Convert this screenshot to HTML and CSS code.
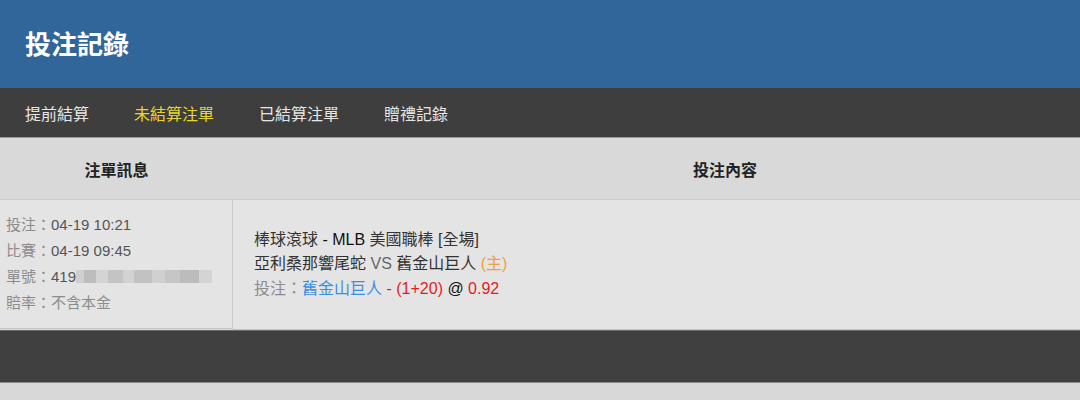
FILE: index.html
```html
<!DOCTYPE html>
<html lang="zh-Hant">
<head>
    <meta charset="UTF-8">
    <meta name="viewport" content="width=device-width, initial-scale=1.0">
    <title>投注記錄</title>
    <link rel="stylesheet" href="styles.css">
</head>
<body>
    <!-- Page title -->
    <header class="top-bar">
        <h1>投注記錄</h1>
    </header>

    <!-- Tabs -->
    <nav class="tabs">
        <a href="#">提前結算</a>
        <a href="#" class="active">未結算注單</a>
        <a href="#">已結算注單</a>
        <a href="#">贈禮記錄</a>
    </nav>

    <!-- Bet table -->
    <div class="table-wrap">
        <div class="bet-table">
            <div class="head-cell">注單訊息</div>
            <div class="head-cell">投注內容</div>

            <div class="info-cell">
                <div><span class="label">投注：</span>04-19 10:21</div>
                <div><span class="label">比賽：</span>04-19 09:45</div>
                <div><span class="label">單號：</span>419<span class="masked"></span></div>
                <div><span class="label">賠率：</span><span class="label">不含本金</span></div>
            </div>
            <div class="content-cell">
                <div class="line">棒球滾球 <span class="strong">- MLB</span> 美國職棒 [全場]</div>
                <div class="line">亞利桑那響尾蛇 <span class="vs">VS</span> 舊金山巨人 <span class="home">(主)</span></div>
                <div class="line"><span class="label">投注：</span><span class="pick">舊金山巨人</span> <span class="odds">- (1+20)</span> <span class="at">@</span> <span class="odds">0.92</span></div>
            </div>
        </div>
    </div>

    <div class="footer-bar"></div>
</body>
</html>
```

FILE: styles.css
```css
body {
    margin: 0;
    padding: 0;
    background-color: #d8d8d8;
    font-family: "Liberation Sans", "Noto Sans CJK TC", sans-serif;
    overflow: hidden;
}

/* Title bar */
.top-bar {
    height: 88px;
    background-color: #31669b;
    display: flex;
    align-items: center;
    padding: 0 0 4px 25px;
    box-sizing: border-box;
}

.top-bar h1 {
    margin: 0;
    color: #fff;
    font-size: 26px;
    font-weight: bold;
    font-family: "Noto Sans CJK TC", sans-serif;
}

/* Tabs */
.tabs {
    height: 49px;
    background-color: #3e3e3e;
    border-bottom: 1px solid #9a9a9a;
    display: flex;
    align-items: center;
    gap: 45px;
    padding-left: 25px;
}

.tabs a {
    color: #e6e6e6;
    font-size: 16px;
    text-decoration: none;
    font-family: "Noto Sans CJK TC", sans-serif;
}

.tabs a.active {
    color: #e8d72a;
}

/* Table */
.table-wrap {
    overflow: hidden;
}

.bet-table {
    display: grid;
    grid-template-columns: 233px 984px;
    width: 1217px;
}

.head-cell {
    height: 61px;
    background-color: #d9d9d9;
    border-bottom: 1px solid #cdcdcd;
    display: flex;
    align-items: center;
    justify-content: center;
    font-size: 16px;
    font-weight: bold;
    color: #222;
    font-family: "Noto Sans CJK TC", sans-serif;
}

.info-cell,
.content-cell {
    background-color: #e4e4e4;
    height: 129px;
    border-bottom: 1px solid #c6c6c6;
}

.info-cell {
    border-right: 1px solid #cacaca;
    padding: 12px 0 0 6px;
    box-sizing: border-box;
    font-size: 15px;
    line-height: 26px;
    color: #555;
    white-space: nowrap;
}

.info-cell .label {
    color: #8c8c8c;
}

.masked {
    display: inline-block;
    width: 136px;
    height: 13px;
    vertical-align: -1px;
    background: linear-gradient(90deg,
        #cfcfcf 0, #cfcfcf 8px,
        #bdbdbd 8px, #bdbdbd 20px,
        #d4d4d4 20px, #d4d4d4 32px,
        #c4c4c4 32px, #c4c4c4 47px,
        #d2d2d2 47px, #d2d2d2 58px,
        #c2c2c2 58px, #c2c2c2 76px,
        #d0d0d0 76px, #d0d0d0 89px,
        #c6c6c6 89px, #c6c6c6 104px,
        #bcbcbc 104px, #bcbcbc 123px,
        #d4d4d4 123px, #d4d4d4 136px);
}

.content-cell {
    display: flex;
    flex-direction: column;
    justify-content: center;
    padding-left: 21px;
    font-size: 16px;
    line-height: 24.5px;
    color: #333;
}

.content-cell .label {
    color: #8c8c8c;
}

.strong {
    color: #111;
}

.vs {
    color: #666;
}

.home {
    color: #f0a040;
}

.pick {
    color: #3a8ee0;
}

.odds {
    color: #e01e1e;
}

.at {
    color: #111;
}

/* Bottom bar */
.footer-bar {
    height: 51px;
    background-color: #404040;
    border-top: 1px solid #6a6a6a;
    border-bottom: 1px solid #8a8a8a;
}
```
